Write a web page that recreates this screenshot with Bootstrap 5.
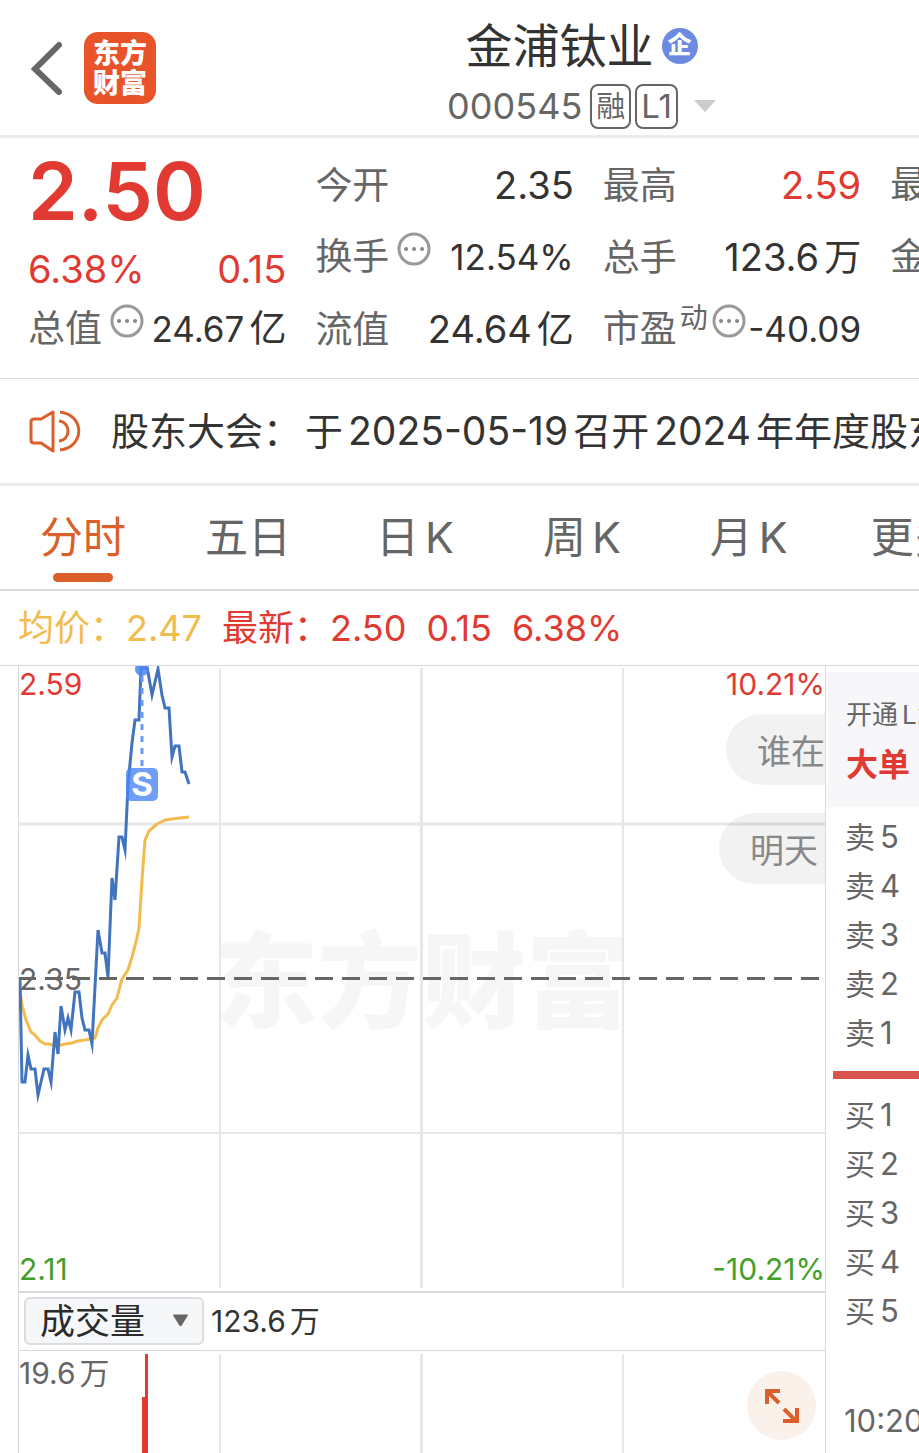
<!DOCTYPE html>
<html lang="zh-CN">
<head>
<meta charset="utf-8">
<meta name="viewport" content="width=device-width, initial-scale=1">
<title>金浦钛业 000545</title>
<link href="https://cdn.jsdelivr.net/npm/bootstrap@5.3.0/dist/css/bootstrap.min.css" rel="stylesheet">
<style>
  :root { --ink:#333; --soft:#666; --up:#e03a32; --down:#439f2c; --accent:#da5f2b; --line:#d8d9db; --avg:#f2bb4e; }
  body { font-family: Inter, "Noto Sans CJK SC", sans-serif; color: var(--ink); background:#fff; overflow-x:hidden; }
  .up { color: var(--up); } .down { color: var(--down); } .soft { color: var(--soft); }
  .clip { overflow:hidden; white-space:nowrap; }

  .topbar { height:138px; border-bottom:3px solid #ececec; padding-left:30px; }
  .logo-tile { width:72px; height:72px; border-radius:14px; background:#e9532a; color:#fff; font-size:27px; line-height:30px; font-weight:900; margin-left:21px; padding-top:2px; text-decoration:none; }
  .title-box { margin-left:88px; padding-top:9px; }
  .stock-name { font-size:47px; line-height:60px; font-weight:400; }
  .corp { width:36px; height:36px; border-radius:50%; background:#6b8ae0; color:#fff; font-size:24px; line-height:34px; font-weight:900; }
  .stock-code { font-size:36px; line-height:44px; }
  .tag { border:2px solid var(--soft); border-radius:8px; height:45px; line-height:41px; font-size:29px; padding:0 4px; }
  .tag-level { font-size:33px; }

  .quote { padding:11px 0 13px 28px; gap:29px; border-bottom:1px solid var(--line); }
  .quote-col { flex:0 0 29%; }
  .quote-row { height:72px; line-height:72px; font-size:38px; display:flex; align-items:baseline; }
  .quote-row .name { font-size:37px; color:var(--soft); }
  .quote-row .val { margin-left:auto; }
  .quote-row .val-tight { font-size:35px; }
  .unit { font-size:37px; margin-left:5px; }
  .hint { width:34px; height:34px; align-self:center; margin-bottom:16px; flex:none; }
  .sup-mark { font-size:28px; line-height:28px; align-self:center; margin:0 0 22px 3px; color:var(--soft); }
  .price { font-size:80px; line-height:84px; font-weight:600; }
  .change { font-size:38px; line-height:48px; padding-top:12px; }

  .notice { height:107px; padding-left:28px; gap:30px; font-size:38px; border-bottom:3px solid #ececec; text-decoration:none; color:var(--ink); }
  .sp { margin:0 5px; font-size:39px; }

  .periods { height:105px; padding-left:40px; gap:79px; border-bottom:2px solid var(--line); }
  .period { border:0; background:none; padding:0; font-size:43px; color:var(--soft); height:103px; line-height:103px; flex:none; position:relative; }
  .period-k { padding:0 4px 0 6px; }
  .period-k span { margin-left:6px; }
  .period.active { color:var(--accent); }
  .period.active::after { content:""; position:absolute; left:13px; right:13px; bottom:7px; height:9px; border-radius:5px; background:var(--accent); }

  .legend-row { height:74px; font-size:36px; padding-left:18px; gap:20px; }
  .avg { color:var(--avg); }

  .market { border-top:1px solid var(--line); }
  .plot-col { margin-left:18px; border-left:1px solid var(--line); border-right:1px solid var(--line); min-width:0; }
  .plot { position:relative; overflow:hidden; }
  .plot svg { display:block; width:100%; height:auto; }
  .axis { position:absolute; font-size:30px; line-height:36px; }
  .pill { position:absolute; right:0; border:0; height:71px; border-radius:36px 0 0 36px; background:rgba(0,0,0,.05); color:#888; font-size:34px; padding:3px 0 0 31px; text-align:left; overflow:hidden; white-space:nowrap; }
  .pill-a { width:99px; top:48px; } .pill-b { width:106px; top:147px; }
  .volume-bar { height:60px; border-top:2px solid var(--line); border-bottom:1px solid var(--line); font-size:30px; padding-left:5px; gap:7px; }
  .pick { position:relative; width:180px; }
  .pick select { appearance:none; width:100%; height:48px; border:2px solid #dcdde0; border-radius:6px; background:#f6f7f9; color:#2b2b2b; font-size:35px; line-height:40px; padding:0 0 0 14px; }
  .pick .caret { position:absolute; right:16px; top:17px; width:15px; height:13px; pointer-events:none; }
  .expand { position:absolute; right:9px; top:20px; width:69px; height:69px; border:0; border-radius:50%; background:#fbf1eb; padding:0; }

  .book { flex:0 0 93px; min-width:0; overflow:hidden; font-size:31px; color:var(--soft); }
  .book-promo { background:#f7f7fa; margin:6px 0 0 2px; height:135px; padding:26px 0 0 18px; font-size:26px; line-height:34px; }
  .book-promo strong { display:block; font-size:32px; line-height:48px; margin-top:9px; font-weight:700; }
  .book ul { padding-left:19px; margin:0; }
  .book li { height:49px; line-height:49px; }
  .book li span { font-size:30px; margin-right:5px; }
  .sell { padding-top:5px; }
  .divide { height:8px; background:#d9534f; margin:14px 0 11px 7px; }
  .clock { margin-top:61px; padding-left:18px; line-height:49px; }
</style>
</head>
<body>
<header class="topbar d-flex align-items-center">
  <a href="#" aria-label="返回" class="lh-1"><svg width="33" height="54" viewBox="0 0 33 54"><path d="M29 4 5 28 29 51" fill="none" stroke="#666" stroke-width="6" stroke-linecap="round"/></svg></a>
  <a href="#" class="logo-tile d-flex flex-column align-items-center justify-content-center"><span>东方</span><span>财富</span></a>
  <div class="title-box flex-grow-1 text-center">
    <div class="d-flex justify-content-center align-items-center gap-2">
      <h1 class="stock-name m-0">金浦钛业</h1><span class="corp">企</span>
    </div>
    <div class="d-flex justify-content-center align-items-center soft mt-2">
      <span class="stock-code me-2">000545</span>
      <span class="tag me-1">融</span><span class="tag tag-level">L1</span>
      <svg class="ms-3" width="22" height="12" viewBox="0 0 22 12"><path d="M0 0h22L11 12z" fill="#ccc"/></svg>
    </div>
  </div>
</header>

<section class="quote d-flex clip">
  <div class="quote-col">
    <div class="price up">2.50</div>
    <div class="change up d-flex justify-content-between"><span>6.38%</span><span>0.15</span></div>
    <div class="quote-row"><span class="name">总值</span><svg class="hint ms-2" viewBox="0 0 34 34"><circle cx="17" cy="17" r="15" fill="none" stroke="#999" stroke-width="3"/><path d="M9 17h.1M17 17h.1M25 17h.1" stroke="#888" stroke-width="4" stroke-linecap="round"/></svg><span class="val val-tight">24.67<span class="unit">亿</span></span></div>
  </div>
  <div class="quote-col">
    <div class="quote-row"><span class="name">今开</span><span class="val">2.35</span></div>
    <div class="quote-row"><span class="name">换手</span><svg class="hint ms-2" viewBox="0 0 34 34"><circle cx="17" cy="17" r="15" fill="none" stroke="#999" stroke-width="3"/><path d="M9 17h.1M17 17h.1M25 17h.1" stroke="#888" stroke-width="4" stroke-linecap="round"/></svg><span class="val val-tight">12.54%</span></div>
    <div class="quote-row"><span class="name">流值</span><span class="val">24.64<span class="unit">亿</span></span></div>
  </div>
  <div class="quote-col">
    <div class="quote-row"><span class="name">最高</span><span class="val up">2.59</span></div>
    <div class="quote-row"><span class="name">总手</span><span class="val">123.6<span class="unit">万</span></span></div>
    <div class="quote-row"><span class="name">市盈</span><span class="sup-mark">动</span><svg class="hint ms-1" viewBox="0 0 34 34"><circle cx="17" cy="17" r="15" fill="none" stroke="#999" stroke-width="3"/><path d="M9 17h.1M17 17h.1M25 17h.1" stroke="#888" stroke-width="4" stroke-linecap="round"/></svg><span class="val val-tight">-40.09</span></div>
  </div>
  <div class="quote-col">
    <div class="quote-row"><span class="name">最低</span></div>
    <div class="quote-row"><span class="name">金额</span></div>
  </div>
</section>

<a href="#" class="notice d-flex align-items-center clip">
  <svg class="flex-shrink-0" width="53" height="44" viewBox="0 0 53 44" fill="none" stroke="#da5f2b" stroke-width="3"><path d="M25 3v39L13 34H6q-3 0-3-3V13q0-3 3-3h7z" stroke-linejoin="round"/><path d="M31 12c12 1 12 19 0 20M32 3c25 3 25 35 0 38"/></svg>
  <span>股东大会：<span class="ms-1">于</span><span class="sp">2025-05-19</span>召开<span class="sp">2024</span>年年度股东大会</span>
</a>

<nav class="periods d-flex clip">
  <button class="period active">分时</button><button class="period">五日</button><button class="period period-k">日<span>K</span></button><button class="period period-k">周<span>K</span></button><button class="period period-k">月<span>K</span></button><button class="period">更多</button>
</nav>

<div class="legend-row d-flex align-items-center clip">
  <span class="avg">均价：2.47</span><span class="up">最新：2.50</span><span class="up">0.15</span><span class="up">6.38%</span>
</div>

<main class="market d-flex clip">
  <div class="plot-col flex-grow-1">
    <div class="plot">
      <svg viewBox="19 666 806 625" role="img" aria-label="分时走势">
        <text x="214" y="1020" font-size="104" font-weight="900" fill="#f6f6f7">东方财富</text>
        <path d="M220 668V1288M623 668V1288M19 1133H825" stroke="#e6e7ea" stroke-width="2"/>
        <path d="M421.500 668V1288M19 824H825" stroke="#e6e7ea" stroke-width="3"/>
        <path d="M18 978.500H820" stroke="#666" stroke-width="3" stroke-dasharray="18 9"/>
        <polyline fill="none" stroke="#f2bb4e" stroke-width="3" stroke-linejoin="round" points="20,990 22,1005 26,1020 31,1032 35,1035 40,1041 45,1044 50,1044 54,1046 61,1045 65,1044 72,1043 78,1041 85,1040 95,1038 98,1028 102,1020 108,1014 112,1005 117,998 119,990 122,979 128,970 132,957 136,942 139,928 142,880 145,840 149,831 157,824 165,820 172,819 180,818 189,817"/>
        <polyline fill="none" stroke="#4273bd" stroke-width="3" stroke-miterlimit="8" points="20,980 22,1082 25,1082 28,1055 31,1069 35,1069 38,1095 41,1082 44,1069 48,1069 51,1082 55,1032 58,1054 61,1006 65,1030 68,1018 71,1030 75,992 79,992 82,1018 85,1030 89,1030 92,1044 98,930 102,953 105,953 108,977 112,878 115,900 119,837 122,837 125,850 128,785 132,743 135,720 139,720 141,668 147,668 148,672 152,695 158,669 162,695 165,708 169,708 172,757 175,746 179,746 182,772 185,772 189,784"/>
        <circle cx="142" cy="669" r="7" fill="#4a86f5" opacity=".85"/>
        <path d="M142 676V768" stroke="#6a9bf7" stroke-width="3" stroke-dasharray="6 6"/>
        <rect x="126" y="768" width="32" height="33" rx="5" fill="#4a86f5" opacity=".8"/>
        <text x="142" y="796" font-family="Inter, sans-serif" font-size="33" font-weight="700" fill="#fff" text-anchor="middle">S</text>
      </svg>
      <span class="axis start-0 top-0 up">2.59</span>
      <span class="axis end-0 top-0 up">10.21%</span>
      <span class="axis start-0 top-50 translate-middle-y soft">2.35</span>
      <span class="axis start-0 bottom-0 mb-1 down">2.11</span>
      <span class="axis end-0 bottom-0 mb-1 down">-10.21%</span>
      <button class="pill pill-a">谁在</button>
      <button class="pill pill-b">明天</button>
    </div>
    <div class="volume-bar d-flex align-items-center">
      <div class="pick"><select aria-label="指标"><option>成交量</option></select><svg class="caret" viewBox="0 0 16 13"><path d="M1 0h14q1 0 1 1L9 12q-1 1-2 0L0 1q0-1 1-1z" fill="#666"/></svg></div>
      <span>123.6<span class="ms-1">万</span></span>
    </div>
    <div class="plot">
      <svg viewBox="19 1351 806 102" role="img" aria-label="成交量">
        <path d="M220 1354V1453M623 1354V1453" stroke="#e6e7ea" stroke-width="2"/><path d="M421.500 1354V1453" stroke="#e6e7ea" stroke-width="3"/>
        <path d="M143.500 1397V1453M146.500 1354V1453" stroke="#e03a32" stroke-width="3"/>
      </svg>
      <span class="axis start-0 top-0 mt-1 soft">19.6<span class="ms-1">万</span></span>
      <button class="expand" aria-label="放大"><svg viewBox="0 0 69 69" fill="none" stroke="#da5f2b" stroke-width="4"><path d="M33 20H20V33M20 20 32 32M37 38 50 51M50 37V50H36"/></svg></button>
    </div>
  </div>
  <aside class="book">
    <div class="book-promo clip">开通<span class="ms-1">L2</span><strong class="up">大单</strong></div>
    <ul class="list-unstyled sell"><li><span>卖</span>5</li><li><span>卖</span>4</li><li><span>卖</span>3</li><li><span>卖</span>2</li><li><span>卖</span>1</li></ul>
    <div class="divide"></div>
    <ul class="list-unstyled"><li><span>买</span>1</li><li><span>买</span>2</li><li><span>买</span>3</li><li><span>买</span>4</li><li><span>买</span>5</li></ul>
    <div class="clock clip">10:20</div>
  </aside>
</main>
<script src="https://cdn.jsdelivr.net/npm/bootstrap@5.3.0/dist/js/bootstrap.bundle.min.js"></script>
</body>
</html>
